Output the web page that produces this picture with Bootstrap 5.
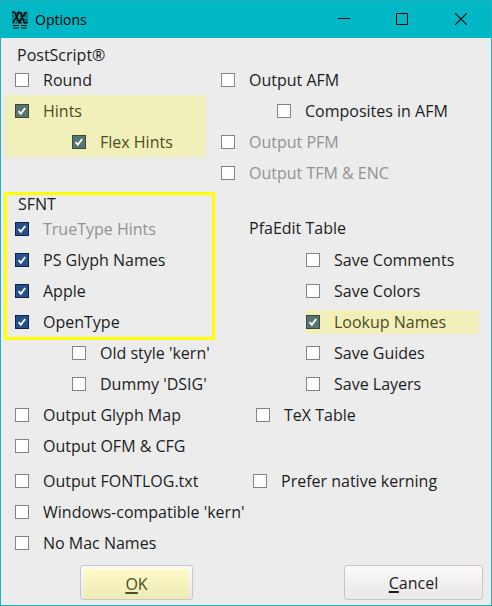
<!DOCTYPE html>
<html lang="en">
<head>
<meta charset="utf-8">
<meta name="viewport" content="width=device-width, initial-scale=1">
<title>Options</title>
<link rel="stylesheet" href="https://cdn.jsdelivr.net/npm/bootstrap@5.3.0/dist/css/bootstrap.min.css">
<style>
  body { background: #ececec; color: #1c1c1e; font: 16px/18px "Open Sans", "Noto Sans", sans-serif; }
  .dialog { border: 1px solid #1fb1bd; }
  .titlebar { background: #02b7c6; color: #000; height: 37px; padding-left: 10px; }
  .titlebar h1 { font-size: 14px; line-height: 22px; padding-left: 6px; }
  .win-btn { width: 58px; height: 36px; color: #000; }
  .win-close { width: 60px; }
  .win-btn svg, .app-icon { display: block; }
  .split { display: grid; grid-template-columns: minmax(0, 214fr) minmax(0, 276fr); }
  .split-wide { grid-template-columns: minmax(0, 248fr) minmax(0, 242fr); }
  .heading { font-size: 16px; line-height: 18px; float: none; }
  .opt { display: flex; height: 31px; padding: 9px 0 0 14px; gap: 14px; white-space: nowrap; }
  .opt .form-check-input { flex: none; width: 14px; height: 14px; margin: 0; border: 1px solid #7f8487; border-radius: 0; background-color: #fff; opacity: 1; }
  .opt .form-check-input:checked { border-color: #10233f; background-color: #27508f; background-size: 12px 12px;
    background-image: url("data:image/svg+xml,%3Csvg xmlns='http://www.w3.org/2000/svg' viewBox='0 0 12 12'%3E%3Cpath d='M2.6 6.2 4.8 8.8 9.2 3' fill='none' stroke='%23fff' stroke-width='1.9'/%3E%3C/svg%3E"); }
  .opt label { line-height: 14px; }
  .opt .form-check-input:disabled ~ label { color: #929292; opacity: 1; }
  .in-sub { padding-left: 71px; }
  .r-main { padding-left: 6px; }
  .r-sub { padding-left: 62px; }
  .r-save { padding-left: 91px; }
  .r-tex { padding-left: 41px; }
  .r-kern { padding-left: 4px; }
  .pfa { padding: 0 0 7px 34px; }
  .marked { background: #f1efba; color: #4d4c1c; }
  .marked .form-check-input:checked { border-color: #3b4a34; background-color: #557571; }
  .group-mark { margin: 0 9px 0 4px; }
  .group-mark .opt { margin-left: -4px; }
  .row-mark { height: 24px; margin: 4px 12px 3px 91px; padding: 5px 0 0; }
  .framed { margin: 7px 3px 0 6px; outline: 3px solid #ff0; }
  .framed .heading { padding-left: 11px; }
  .framed .opt { padding-left: 8px; }
  .dlg-btn { height: 35px; border: 1px solid #c6c6c6; border-radius: 3px; background: linear-gradient(#fdfafa, #e9e8e6); color: #1c1c1e; font-size: 16px; line-height: 24px; padding: 3px; }
  .dlg-btn u { text-underline-offset: 2px; text-decoration-thickness: 2px; }
  .ok-btn { width: 113px; }
  .ok-btn span { background: linear-gradient(#fff9c8, #ecebb5); color: #4d4c1c; line-height: 30px; }
  .cancel-btn { width: 139px; }
  .actions { padding: 7px 8px 5px 79px; }
</style>
</head>
<body>
<main class="dialog">
  <header class="titlebar d-flex align-items-start justify-content-between">
    <div class="d-flex align-items-center h-100">
      <svg class="app-icon" width="18" height="18" viewBox="0 0 18 18" fill="none" stroke="#000" aria-hidden="true">
        <path stroke-width=".8" opacity=".6" d="M1 2h16M1 5h16M1 9h16M1 12h16M2 1v11M6 1v11M10 1v11M14 1v11M16 1v11"/>
        <path stroke-width="1.5" d="M1 1q3-1 4 3l3 7q1 2 2 0M7 1q3 0 4 4l2 6q1 2 4 0M8 1 2 12M15 1 8 11"/>
        <path stroke-width="1.2" d="M2 14.5h6M10 14.5h6M2 17h6M10 17h6"/>
      </svg>
      <h1 class="m-0 fw-normal">Options</h1>
    </div>
    <div class="d-flex">
      <button type="button" class="btn win-btn p-0 border-0 d-flex align-items-center justify-content-center" aria-label="Minimize"><svg width="12" height="12" viewBox="0 0 12 12"><path d="M0 5.5h12" stroke="#000"/></svg></button>
      <button type="button" class="btn win-btn p-0 border-0 d-flex align-items-center justify-content-center" aria-label="Maximize"><svg width="12" height="12" viewBox="0 0 12 12"><path d="M.5.5h11v11H.5z" fill="none" stroke="#000"/></svg></button>
      <button type="button" class="btn win-btn win-close p-0 border-0 d-flex align-items-center justify-content-center" aria-label="Close"><svg width="12" height="12" viewBox="0 0 12 12"><path d="m.3.3 11.4 11.4M11.7.3.3 11.7" stroke="#000" stroke-width="1.1"/></svg></button>
    </div>
  </header>

  <form>
    <fieldset>
      <legend class="heading m-0 ps-3 pt-2">PostScript®</legend>
      <div class="split">
        <div>
          <div class="opt"><input class="form-check-input" type="checkbox" id="round"><label for="round">Round</label></div>
          <div class="marked group-mark">
            <div class="opt"><input class="form-check-input" type="checkbox" id="hints" checked><label for="hints">Hints</label></div>
            <div class="opt in-sub"><input class="form-check-input" type="checkbox" id="flex" checked><label for="flex">Flex Hints</label></div>
          </div>
        </div>
        <div>
          <div class="opt r-main"><input class="form-check-input" type="checkbox" id="afm"><label for="afm">Output AFM</label></div>
          <div class="opt r-sub"><input class="form-check-input" type="checkbox" id="comp"><label for="comp">Composites in AFM</label></div>
          <div class="opt r-main"><input class="form-check-input" type="checkbox" id="pfm" disabled><label for="pfm">Output PFM</label></div>
          <div class="opt r-main"><input class="form-check-input" type="checkbox" id="tfm" disabled><label for="tfm">Output TFM &amp; ENC</label></div>
        </div>
      </div>
    </fieldset>

    <div class="split">
      <div>
        <fieldset class="framed">
          <legend class="heading m-0">SFNT</legend>
          <div class="opt"><input class="form-check-input" type="checkbox" id="tth" checked disabled><label for="tth">TrueType Hints</label></div>
          <div class="opt"><input class="form-check-input" type="checkbox" id="psn" checked><label for="psn">PS Glyph Names</label></div>
          <div class="opt"><input class="form-check-input" type="checkbox" id="apple" checked><label for="apple">Apple</label></div>
          <div class="opt"><input class="form-check-input" type="checkbox" id="ot" checked><label for="ot">OpenType</label></div>
        </fieldset>
        <div class="opt in-sub"><input class="form-check-input" type="checkbox" id="kern"><label for="kern">Old style 'kern'</label></div>
        <div class="opt in-sub"><input class="form-check-input" type="checkbox" id="dsig"><label for="dsig">Dummy 'DSIG'</label></div>
        <div class="opt"><input class="form-check-input" type="checkbox" id="gmap"><label for="gmap">Output Glyph Map</label></div>
        <div class="opt"><input class="form-check-input" type="checkbox" id="ofm"><label for="ofm">Output OFM &amp; CFG</label></div>
      </div>
      <div class="d-flex flex-column justify-content-end">
        <fieldset>
          <legend class="heading m-0 pfa">PfaEdit Table</legend>
          <div class="opt r-save"><input class="form-check-input" type="checkbox" id="scom"><label for="scom">Save Comments</label></div>
          <div class="opt r-save"><input class="form-check-input" type="checkbox" id="scol"><label for="scol">Save Colors</label></div>
          <div class="opt marked row-mark"><input class="form-check-input" type="checkbox" id="look" checked><label for="look">Lookup Names</label></div>
          <div class="opt r-save"><input class="form-check-input" type="checkbox" id="sgui"><label for="sgui">Save Guides</label></div>
          <div class="opt r-save"><input class="form-check-input" type="checkbox" id="slay"><label for="slay">Save Layers</label></div>
        </fieldset>
        <div class="opt r-tex"><input class="form-check-input" type="checkbox" id="tex"><label for="tex">TeX Table</label></div>
        <div class="opt" aria-hidden="true"></div>
      </div>
    </div>

    <div class="split split-wide pt-1">
      <div>
        <div class="opt"><input class="form-check-input" type="checkbox" id="flog"><label for="flog">Output FONTLOG.txt</label></div>
        <div class="opt"><input class="form-check-input" type="checkbox" id="wkern"><label for="wkern">Windows-compatible 'kern'</label></div>
        <div class="opt"><input class="form-check-input" type="checkbox" id="nomac"><label for="nomac">No Mac Names</label></div>
      </div>
      <div>
        <div class="opt r-kern"><input class="form-check-input" type="checkbox" id="native"><label for="native">Prefer native kerning</label></div>
      </div>
    </div>

    <div class="actions d-flex justify-content-between">
      <button type="button" class="btn dlg-btn ok-btn"><span class="d-block"><u>O</u>K</span></button>
      <button type="button" class="btn dlg-btn cancel-btn"><u>C</u>ancel</button>
    </div>
  </form>
</main>
<script src="https://cdn.jsdelivr.net/npm/bootstrap@5.3.0/dist/js/bootstrap.bundle.min.js"></script>
</body>
</html>
